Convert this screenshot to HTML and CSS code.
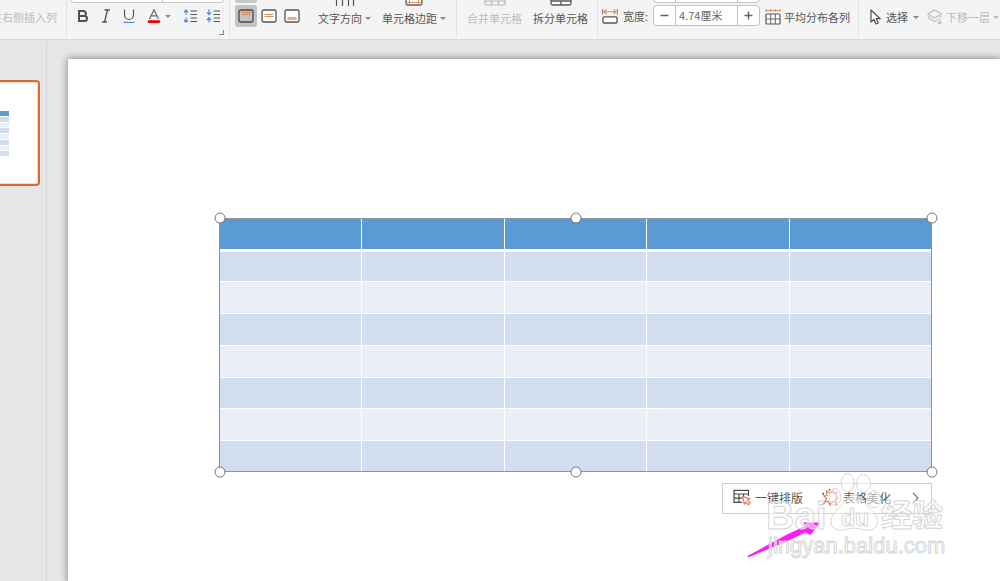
FILE: index.html
```html
<!DOCTYPE html>
<html lang="zh-CN">
<head>
<meta charset="utf-8">
<title>演示文稿</title>
<link rel="stylesheet" href="styles.css">
</head>
<body>
<div class="app">
  <header class="ribbon">
    <div class="group insert">
      <button class="tool label disabled" disabled>在右侧插入列</button>
    </div>

    <div class="group font">
      <div class="upper fontbox"><span></span><span></span></div>
      <div class="row">
        <button class="tool sq" aria-label="加粗"><svg width="14" height="14" viewBox="0 0 14 14"><path d="M3 2H7.500a2.500 2.500 0 0 1 0 5H3ZM3 7H8.500a2.500 2.500 0 0 1 0 5H3Z" fill="none" stroke="#505050" stroke-width="2"/></svg></button>
        <button class="tool sq" aria-label="倾斜"><svg width="14" height="14" viewBox="0 0 14 14"><path d="M5.500 1H11M3 13H8M8.500 1 5.500 13" fill="none" stroke="#555" stroke-width="1.400"/></svg></button>
        <button class="tool sq" aria-label="下划线"><svg width="14" height="14" viewBox="0 0 14 14"><path d="M2.500 .5V6a4.200 4.200 0 0 0 9 0V.5" fill="none" stroke="#555" stroke-width="1.200"/><path d="M1.500 13.400H12.500" stroke="#5b8fdc" stroke-width="1.200"/></svg></button>
        <button class="tool color" aria-label="字体颜色"><svg width="14" height="14" viewBox="0 0 14 14"><path d="M2.500 10 7 .8 11.500 10M4.200 6.800H9.800" fill="none" stroke="#666" stroke-width="1.200"/><path d="M2 12.600H12" stroke="#f00000" stroke-width="2.600" stroke-linecap="round"/></svg><i class="caret"></i></button>
        <button class="tool sq" aria-label="增大行距"><svg width="14" height="14" viewBox="0 0 14 14"><path d="M7.500 2H14M7.500 5.500H14M7.500 9H14M7.500 12.500H14" stroke="#555" stroke-width="1.200"/><path d="M3 5.500V1.500M1 3.300 3 1 5 3.300M3 8.500V13M1 11 3 13.200 5 11" fill="none" stroke="#4f86dc" stroke-width="1.200"/></svg></button>
        <button class="tool sq" aria-label="减小行距"><svg width="14" height="14" viewBox="0 0 14 14"><path d="M7.500 2H14M7.500 5.500H14M7.500 9H14M7.500 12.500H14" stroke="#555" stroke-width="1.200"/><path d="M3 .5V5M1 3.300 3 5.600 5 3.300M3 13.500V9M1 11 3 8.700 5 11" fill="none" stroke="#4f86dc" stroke-width="1.200"/></svg></button>
      </div>
      <button class="launcher" aria-label="字体设置"></button>
    </div>

    <div class="group align">
      <div class="stack">
        <div class="upper aligntop"></div>
        <div class="row alignrow">
          <button class="tool al active" aria-label="顶端对齐"><svg width="16" height="14" viewBox="0 0 16 14"><rect x="1" y="1" width="14" height="12" rx="1.500" fill="none" stroke="#484848" stroke-width="1.300"/><path d="M3.500 3.500H12.500M3.500 5.500H12.500" stroke="#cf8555"/></svg></button>
          <button class="tool al" aria-label="垂直居中"><svg width="16" height="14" viewBox="0 0 16 14"><rect x="1" y="1" width="14" height="12" rx="1.500" fill="#fff" stroke="#555" stroke-width="1.300"/><path d="M3.500 5.500H12.500M3.500 7.500H12.500" stroke="#dc8f5e"/></svg></button>
          <button class="tool al" aria-label="底端对齐"><svg width="16" height="14" viewBox="0 0 16 14"><rect x="1" y="1" width="14" height="12" rx="1.500" fill="#fff" stroke="#555" stroke-width="1.300"/><path d="M3.500 9.500H12.500" stroke="#e3ad8c" stroke-width="3"/></svg></button>
        </div>
      </div>
      <div class="row texts">
        <button class="tool big"><svg width="22" height="12" viewBox="0 0 22 12"><path d="M2.500 0V12M8.500 0V12M14.500 0V12M19.500 0V12" stroke="#555" stroke-width="1.200"/></svg><span class="cap">文字方向<i class="caret"></i></span></button>
        <button class="tool big"><svg width="18" height="12" viewBox="0 0 18 12"><rect x="1" y="-4" width="16" height="15" rx="1.500" fill="#fff" stroke="#5a5a5a" stroke-width="1.300"/><path d="M4.500 0V11M13.500 0V11M1.500 8.500H16.500" stroke="#dc8c5c"/></svg><span class="cap">单元格边距<i class="caret"></i></span></button>
      </div>
    </div>

    <div class="group cells">
      <button class="tool big disabled" disabled><svg width="22" height="12" viewBox="0 0 22 12"><path d="M1 0V9.500Q1 11 2.500 11H19.500Q21 11 21 9.500V0M7.500 7V11M14.500 7V11M1 7H21" fill="none" stroke="#b8b8b8" stroke-width="1.200"/></svg><span class="cap">合并单元格</span></button>
      <button class="tool big"><svg width="22" height="12" viewBox="0 0 22 12"><path d="M1 0V9.500Q1 11 2.500 11H19.500Q21 11 21 9.500V0M11 7V11M1 7H21" fill="#fff" stroke="#555" stroke-width="1.300"/></svg><span class="cap">拆分单元格</span></button>
    </div>

    <div class="group size">
      <label class="sizelabel" for="colwidth"><svg width="16" height="16" viewBox="0 0 16 16"><path d="M.7 1V6.500M15.300 1V6.500" stroke="#777"/><path d="M2 3.700H14M4.500 1.300 2 3.700 4.500 6.100M11.500 1.300 14 3.700 11.500 6.100" fill="none" stroke="#dd8755" stroke-width="1.100"/><rect x="1" y="8.800" width="14" height="6.200" rx="1" fill="#fff" stroke="#555" stroke-width="1.300"/></svg><span>宽度:</span></label>
      <div class="stack">
        <div class="upper spinner ghost"><span></span><span></span><span></span></div>
        <div class="spinner">
          <button aria-label="减小宽度"><svg width="9" height="9" viewBox="0 0 9 9"><path d="M.5 4.500H8.500" stroke="#666" stroke-width="1.500"/></svg></button>
          <input id="colwidth" value="4.74厘米">
          <button aria-label="增大宽度"><svg width="9" height="9" viewBox="0 0 9 9"><path d="M.5 4.500H8.500M4.500 .5V8.500" stroke="#666" stroke-width="1.500"/></svg></button>
        </div>
      </div>
      <button class="tool label"><svg width="16" height="16" viewBox="0 0 16 16"><path d="M1 0V3M5.700 0V3M10.300 0V3M15 0V3M1 1.500H15" stroke="#dd8e60" fill="none"/><rect x="1" y="5" width="14" height="10" rx="1" fill="#fff" stroke="#555" stroke-width="1.200"/><path d="M5.700 5V15M10.300 5V15M1 10H15" stroke="#666"/></svg><span>平均分布各列</span></button>
    </div>

    <div class="group arrange">
      <button class="tool label"><svg width="11" height="16" viewBox="0 0 11 16"><path d="M1 1V13L4 10.500 6 15 8.200 14 6.200 9.700H10.200Z" fill="#fff" stroke="#505050" stroke-width="1.200" stroke-linejoin="round"/></svg><span>选择</span><i class="caret"></i></button>
      <button class="tool label disabled" disabled><svg width="16" height="16" viewBox="0 0 16 16"><path d="M7.500 1 14.500 5 7.500 9 .700 5ZM.700 8.500 7.500 12.500 10.500 10.800M.700 8.500 2.500 7.200M14.500 8 12.500 7M12.700 9V15M10.700 13 12.700 15 14.700 13" fill="none" stroke="#bdbdbd" stroke-width="1.100"/></svg><span>下移一层</span><i class="caret"></i></button>
    </div>
  </header>

  <main class="workspace">
    <aside class="thumbs">
      <div class="thumb"><div class="mini"><i></i><i></i><i></i><i></i><i></i><i></i><i></i><i></i></div></div>
    </aside>
    <section class="stage">
      <div class="slide">
        <div class="object">
          <table class="grid" aria-label="表格">
            <thead><tr><th></th><th></th><th></th><th></th><th></th></tr></thead>
            <tbody>
              <tr><td></td><td></td><td></td><td></td><td></td></tr>
              <tr><td></td><td></td><td></td><td></td><td></td></tr>
              <tr><td></td><td></td><td></td><td></td><td></td></tr>
              <tr><td></td><td></td><td></td><td></td><td></td></tr>
              <tr><td></td><td></td><td></td><td></td><td></td></tr>
              <tr><td></td><td></td><td></td><td></td><td></td></tr>
              <tr><td></td><td></td><td></td><td></td><td></td></tr>
            </tbody>
          </table>
          <i class="handle tl"></i><i class="handle tc"></i><i class="handle tr"></i>
          <i class="handle bl"></i><i class="handle bc"></i><i class="handle br"></i>
          <div class="floatbar">
            <button><svg width="18" height="17" viewBox="0 0 18 17"><path d="M9 13.300H1V1.300H15.500V7M1 5H15.500M6 5V13.300M1 9.200H9M10.500 5V8" fill="none" stroke="#4c4c4c" stroke-width="1.200"/><path d="M9.500 7.500 16.800 9.600 14.500 11.200 17 14 15.200 15.800 12.700 13 11.300 15.200Z" fill="#fff" stroke="#ef7155" stroke-width="1.200" stroke-linejoin="round"/></svg><span>一键排版</span></button>
            <button><svg width="18" height="17" viewBox="0 0 18 17"><path d="M9.500 4 12 1.500 12.500 4.500 16 3.500 14.500 7 17 9 14.200 10.500 15.500 13.500 11.500 12.500 9 16 7.500 12.500 3.500 13 5.500 9.500 3 7 6 6.500 5.500 2Z" fill="#fff" stroke="#f0705a" stroke-width="1.200"/><path d="M1.500 4 3 5.500M.5 16 3.500 14M14.500 14.500 16 16M8.500 0V1.500" stroke="#444" stroke-width="1.300"/></svg><span>表格美化</span></button>
            <button class="more" aria-label="更多"><svg width="7" height="12" viewBox="0 0 7 12"><path d="M1 1 6 6 1 11" fill="none" stroke="#777" stroke-width="1.200"/></svg></button>
          </div>
          <svg class="pointer" width="74" height="36" viewBox="0 0 74 36"><path d="M.5 34 40 12.500 58.500 4 56 .5H73.500L63.500 13 58.500 10.500 36 21 1 35.500Z" fill="#fa1ef5"/></svg>
          <svg class="watermark" width="190" height="96" viewBox="0 0 190 96">
            <g class="ink">
              <path d="M92 29C99 29 102 36 107 42C113 48 117 52 115 58C113 65 106 65 99 63Q92 61 85 63C77 66 70 63 69 57C68 50 74 45 79 40C83 35 86 29 92 29Z"/>
              <ellipse cx="85.500" cy="16.500" rx="6.500" ry="9"/>
              <ellipse cx="101.500" cy="17.500" rx="7" ry="9"/>
              <ellipse cx="73" cy="31" rx="6" ry="8.500"/>
              <ellipse cx="112" cy="33" rx="6.500" ry="8.500"/>
              <text x="4" y="63" class="brand">Bai</text>
              <text x="79" y="60" class="du">du</text>
              <text x="119" y="60" class="jy">经验</text>
              <text x="6" y="87" class="url">jingyan.baidu.com</text>
            </g>
          </svg>
        </div>
      </div>
    </section>
  </main>
</div>
</body>
</html>
```
FILE: styles.css
```css
* { box-sizing: border-box; }
body { margin: 0; font-family: "Noto Sans CJK SC", sans-serif; font-size: 11px; color: #555; }
button, input { font: inherit; color: inherit; border: 0; padding: 0; margin: 0; background: none; }
svg { display: block; flex: none; }
.app { display: flex; flex-direction: column; height: 100vh; overflow: hidden; background: #e7e7e7; }

.ribbon { display: flex; flex: none; height: 39px; overflow: hidden; background: #f4f4f4; box-shadow: 0 1px 1px #d8d8d8; position: relative; }
.group { position: relative; display: flex; flex: none; border-right: 1px solid #e4e4e4; margin-bottom: 2px; white-space: nowrap; }
.row { display: flex; align-items: center; }
.tool { display: flex; align-items: center; justify-content: center; }
.disabled { color: #bcbcbc; }
.caret { width: 0; height: 0; border: 3px solid transparent; border-top-color: #888; border-bottom: 0; margin-left: 3px; }
.disabled .caret { border-top-color: #bbb; }
.label { height: 34px; gap: 3px; }
.label .caret { margin-left: 0; }

.insert { width: 67px; justify-content: flex-end; padding-right: 9px; }
.font { flex-direction: column; justify-content: flex-end; padding: 0 5px 10px 4px; }
.fontbox { display: flex; flex: none; height: 22px; margin-bottom: 2px; border: 1px solid #c9c9c9; border-radius: 3px; background: #fff; }
.fontbox span { flex: 2; }
.fontbox span:first-child { flex: 3; border-right: 1px solid #c9c9c9; }
.font .row { height: 22px; }
.sq { width: 23px; height: 22px; }
.color { width: 38px; height: 22px; }
.color .caret { margin-left: 4px; }
.launcher { position: absolute; right: 5px; bottom: 2px; width: 5px; height: 5px; border-right: 1px solid #888; border-bottom: 1px solid #888; }

.stack { display: flex; flex-direction: column; justify-content: flex-end; }
.align { padding: 0 10px 0 5px; gap: 15px; }
.align .stack { padding-bottom: 10px; }
.aligntop { flex: none; width: 22px; height: 22px; margin-bottom: 2px; border-radius: 3px; background: #c8c8c8; }
.alignrow { gap: 1px; }
.al { width: 22px; height: 22px; border-radius: 3px; }
.active { background: #c3c3c3; }
.texts { gap: 11px; align-items: flex-end; }
.big { flex-direction: column; justify-content: flex-end; gap: 4px; padding-bottom: 11px; height: 37px; }
.cap { display: flex; align-items: center; height: 16px; line-height: 16px; }
.cells { gap: 11px; padding: 0 9px 0 10px; }

.size { padding: 0 8px 0 4px; gap: 5px; }
.sizelabel { display: flex; align-items: center; gap: 5px; height: 31px; }
.size .stack { padding-bottom: 11px; }
.spinner { display: flex; flex: none; height: 21px; width: 107px; border: 1px solid #c2c2c2; border-radius: 4px; background: #fff; overflow: hidden; }
.spinner button { flex: none; width: 21px; display: flex; align-items: center; justify-content: center; }
.spinner input { flex: 1; min-width: 0; padding: 0 3px 2px; border: solid #c2c2c2; border-width: 0 1px; color: #666; }
.ghost { margin-bottom: 2px; }
.ghost span { flex: none; width: 21px; }
.ghost span:nth-child(2) { flex: 1; border: solid #c2c2c2; border-width: 0 1px; }
.size .label { height: 33px; }
.arrange { border-right: 0; padding-left: 11px; gap: 8px; }
.arrange .label:first-child { gap: 5px; }
.arrange .label:last-child { gap: 3px; }

.workspace { display: flex; flex: 1; min-height: 0; }
.thumbs { flex: none; width: 47px; padding-top: 41px; border-right: 1px solid #d8d8d8; overflow: hidden; }
.thumb { height: 106px; margin: 0 6px 0 -140px; padding: 29px 29px 0 0; border: 2px solid #d56b30; border-radius: 4px; background: #fff; box-shadow: inset 0 0 0 1px #eeddd4; }
.mini { display: flex; flex-direction: column; gap: 1px; height: 45px; }
.mini i { flex: 1; background: #e9eef7; }
.mini i:nth-child(even) { background: #d2deef; }
.mini i:first-child { background: #5b9bd5; }
.stage { flex: 1; display: flex; padding: 20px 0 0 21px; overflow: hidden; }
.slide { position: relative; flex: 1; background: #fff; box-shadow: 0 0 7px 1px rgba(0, 0, 0, .4); }

.object { position: absolute; left: 151px; top: 159px; width: 713px; }
.grid { width: 100%; table-layout: fixed; border-collapse: collapse; outline: 1px solid #8e9299; outline-offset: -1px; }
.grid th, .grid td { height: 32px; padding: 0; border: 1px solid #fff; }
.grid tr > :first-child { border-left: 0; }
.grid tr > :last-child { border-right: 0; }
.grid th { background: #5b9bd5; border-top: 0; border-bottom: 3px solid #fff; }
.grid tbody tr:last-child td { border-bottom: 0; }
.grid td { background: #e9eef7; }
.grid tbody tr:nth-child(odd) td { background: #d2deef; }
.grid tbody tr:nth-child(4n + 1) td { height: 31px; }
.handle { position: absolute; width: 11px; height: 11px; border: 1px solid #777; border-radius: 50%; background: #fff; transform: translate(-50%, -50%); }
.tl, .tc, .tr { top: 0; }
.bl, .bc, .br { top: 100%; }
.tl, .bl { left: 1px; }
.tc, .bc { left: 50%; }
.tr, .br { left: 100%; }

.floatbar { position: absolute; top: calc(100% + 11px); right: 0; display: flex; align-items: center; height: 31px; padding: 0 12px 2px 10px; border: 1px solid #cfcfcf; background: #fff; font-size: 12px; color: #555; white-space: nowrap; }
.floatbar button { display: flex; align-items: center; gap: 4px; }
.floatbar button + button { margin-left: 18px; }
.floatbar .more { margin-left: 21px; }
.pointer { position: absolute; right: 111px; top: calc(100% + 50px); }
.watermark { position: absolute; right: -20px; top: calc(100% - 6px); overflow: visible; }
.ink { fill: rgba(255, 255, 255, .5); stroke: #d6d6d6; stroke-width: 1px; }
.brand { font: bold 39px "Liberation Sans", sans-serif; }
.du { font: bold 23px "Liberation Sans", sans-serif; }
.jy { font: bold 31px "Noto Sans CJK SC", sans-serif; }
.url { font: 22px "Liberation Sans", sans-serif; }
```
